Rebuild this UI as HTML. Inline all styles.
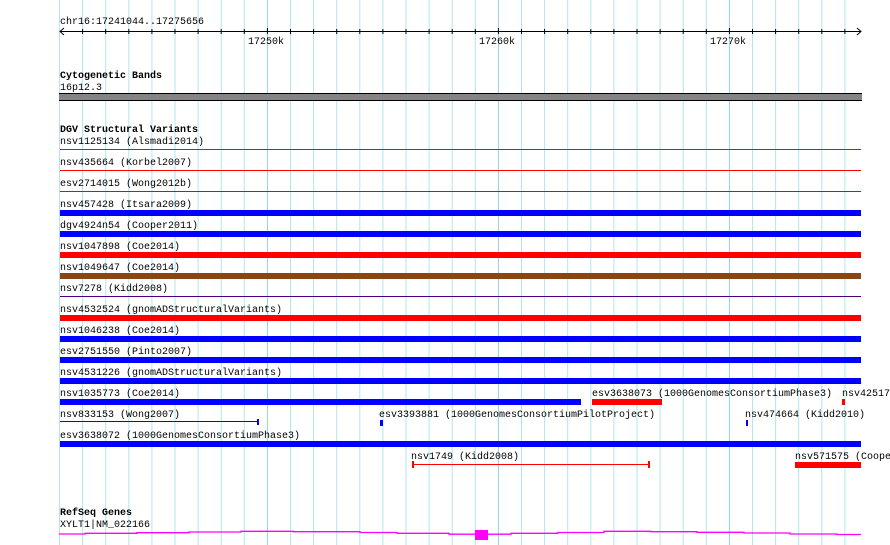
<!DOCTYPE html>
<html><head><meta charset="utf-8"><style>
html,body{margin:0;padding:0;background:#fff;width:890px;height:545px;overflow:hidden}
svg{display:block}
text{font-family:"Liberation Mono","DejaVu Sans Mono",monospace;font-size:10px;fill:#000}
.b{font-weight:bold}
</style></head><body>
<svg width="890" height="545" xmlns="http://www.w3.org/2000/svg">
<g id="grid" stroke-width="1">
<line x1="59.5" y1="0" x2="59.5" y2="545" stroke="#aee8ee"/>
<line x1="82.6" y1="0" x2="82.6" y2="545" stroke="#aee8ee"/>
<line x1="105.7" y1="0" x2="105.7" y2="545" stroke="#aee8ee"/>
<line x1="128.8" y1="0" x2="128.8" y2="545" stroke="#aee8ee"/>
<line x1="151.9" y1="0" x2="151.9" y2="545" stroke="#aee8ee"/>
<line x1="175" y1="0" x2="175" y2="545" stroke="#aee8ee"/>
<line x1="198.1" y1="0" x2="198.1" y2="545" stroke="#aee8ee"/>
<line x1="221.2" y1="0" x2="221.2" y2="545" stroke="#aee8ee"/>
<line x1="244.3" y1="0" x2="244.3" y2="545" stroke="#aee8ee"/>
<line x1="267.4" y1="0" x2="267.4" y2="545" stroke="#92cfe8"/>
<line x1="290.5" y1="0" x2="290.5" y2="545" stroke="#aee8ee"/>
<line x1="313.6" y1="0" x2="313.6" y2="545" stroke="#aee8ee"/>
<line x1="336.7" y1="0" x2="336.7" y2="545" stroke="#aee8ee"/>
<line x1="359.8" y1="0" x2="359.8" y2="545" stroke="#aee8ee"/>
<line x1="382.9" y1="0" x2="382.9" y2="545" stroke="#aee8ee"/>
<line x1="406" y1="0" x2="406" y2="545" stroke="#aee8ee"/>
<line x1="429.1" y1="0" x2="429.1" y2="545" stroke="#aee8ee"/>
<line x1="452.2" y1="0" x2="452.2" y2="545" stroke="#aee8ee"/>
<line x1="475.3" y1="0" x2="475.3" y2="545" stroke="#aee8ee"/>
<line x1="498.4" y1="0" x2="498.4" y2="545" stroke="#92cfe8"/>
<line x1="521.5" y1="0" x2="521.5" y2="545" stroke="#aee8ee"/>
<line x1="544.6" y1="0" x2="544.6" y2="545" stroke="#aee8ee"/>
<line x1="567.7" y1="0" x2="567.7" y2="545" stroke="#aee8ee"/>
<line x1="590.8" y1="0" x2="590.8" y2="545" stroke="#aee8ee"/>
<line x1="613.9" y1="0" x2="613.9" y2="545" stroke="#aee8ee"/>
<line x1="637" y1="0" x2="637" y2="545" stroke="#aee8ee"/>
<line x1="660.1" y1="0" x2="660.1" y2="545" stroke="#aee8ee"/>
<line x1="683.2" y1="0" x2="683.2" y2="545" stroke="#aee8ee"/>
<line x1="706.3" y1="0" x2="706.3" y2="545" stroke="#aee8ee"/>
<line x1="729.4" y1="0" x2="729.4" y2="545" stroke="#92cfe8"/>
<line x1="752.5" y1="0" x2="752.5" y2="545" stroke="#aee8ee"/>
<line x1="775.6" y1="0" x2="775.6" y2="545" stroke="#aee8ee"/>
<line x1="798.7" y1="0" x2="798.7" y2="545" stroke="#aee8ee"/>
<line x1="821.8" y1="0" x2="821.8" y2="545" stroke="#aee8ee"/>
<line x1="844.9" y1="0" x2="844.9" y2="545" stroke="#aee8ee"/>
</g>

<!-- ruler -->
<text x="60" y="24">chr16:17241044..17275656</text>
<line x1="60" y1="31.5" x2="861" y2="31.5" stroke="#000"/>
<path d="M64 28 L60 31.5 L64 35 M857 28 L861 31.5 L857 35" stroke="#000" fill="none"/>
<g stroke="#000">
<path d="M82.6 29v5M105.7 29v5M128.8 29v5M151.9 29v5M175 29v5M198.1 29v5M221.2 29v5M244.3 29v5M267.4 28v6M290.5 29v5M313.6 29v5M336.7 29v5M359.8 29v5M382.9 29v5M406 29v5M429.1 29v5M452.2 29v5M475.3 29v5M498.4 28v6M521.5 29v5M544.6 29v5M567.7 29v5M590.8 29v5M613.9 29v5M637 29v5M660.1 29v5M683.2 29v5M706.3 29v5M729.4 28v6M752.5 29v5M775.6 29v5M798.7 29v5M821.8 29v5M844.9 29v5"/>
</g>
<text x="248" y="44">17250k</text>
<text x="479" y="44">17260k</text>
<text x="710" y="44">17270k</text>

<!-- cytoband -->
<text x="60" y="78" class="b">Cytogenetic Bands</text>
<text x="60" y="90">16p12.3</text>
<rect x="59" y="93" width="803" height="8" fill="#858385"/>
<rect x="59" y="93" width="803" height="1" fill="#000"/>
<rect x="59" y="100" width="803" height="1" fill="#000"/>

<!-- DGV -->
<text x="60" y="132" class="b">DGV Structural Variants</text>
<text x="60" y="144">nsv1125134 (Alsmadi2014)</text>
<rect x="60" y="149" width="801" height="1" fill="#f00"/>
<text x="60" y="165">nsv435664 (Korbel2007)</text>
<rect x="60" y="170" width="801" height="1" fill="#f00"/>
<text x="60" y="186">esv2714015 (Wong2012b)</text>
<rect x="60" y="191" width="801" height="1" fill="#e00"/>
<text x="60" y="207">nsv457428 (Itsara2009)</text>
<rect x="60" y="210" width="801" height="6" fill="#00f"/>
<text x="60" y="228">dgv4924n54 (Cooper2011)</text>
<rect x="60" y="231" width="801" height="6" fill="#00f"/>
<text x="60" y="249">nsv1047898 (Coe2014)</text>
<rect x="60" y="252" width="801" height="6" fill="#f00"/>
<text x="60" y="270">nsv1049647 (Coe2014)</text>
<rect x="60" y="273" width="801" height="6" fill="#8b4513"/>
<text x="60" y="291">nsv7278 (Kidd2008)</text>
<rect x="60" y="296" width="801" height="1" fill="#4b0082"/>
<text x="60" y="312">nsv4532524 (gnomADStructuralVariants)</text>
<rect x="60" y="315" width="801" height="6" fill="#f00"/>
<text x="60" y="333">nsv1046238 (Coe2014)</text>
<rect x="60" y="336" width="801" height="6" fill="#00f"/>
<text x="60" y="354">esv2751550 (Pinto2007)</text>
<rect x="60" y="357" width="801" height="6" fill="#00f"/>
<text x="60" y="375">nsv4531226 (gnomADStructuralVariants)</text>
<rect x="60" y="378" width="801" height="6" fill="#00f"/>

<text x="60" y="396">nsv1035773 (Coe2014)</text>
<rect x="60" y="399" width="521" height="6" fill="#00f"/>
<text x="592" y="396">esv3638073 (1000GenomesConsortiumPhase3)</text>
<rect x="592" y="399" width="70" height="6" fill="#f00"/>
<text x="842" y="396">nsv42517</text>
<rect x="842" y="399" width="3" height="6" fill="#f00"/>

<text x="60" y="417">nsv833153 (Wong2007)</text>
<rect x="60" y="421" width="198" height="1" fill="#00f"/>
<rect x="257" y="419" width="2" height="6" fill="#00f"/>
<text x="379" y="417">esv3393881 (1000GenomesConsortiumPilotProject)</text>
<rect x="380" y="420" width="3" height="6" fill="#00f"/>
<text x="745" y="417">nsv474664 (Kidd2010)</text>
<rect x="746" y="420" width="2" height="6" fill="#00f"/>

<text x="60" y="438">esv3638072 (1000GenomesConsortiumPhase3)</text>
<rect x="60" y="441" width="801" height="6" fill="#00f"/>

<text x="411" y="459">nsv1749 (Kidd2008)</text>
<rect x="413" y="464" width="237" height="1" fill="#f00"/>
<rect x="412" y="461" width="2" height="7" fill="#f00"/>
<rect x="648" y="461" width="2" height="7" fill="#f00"/>
<text x="795" y="459">nsv571575 (Coope</text>
<rect x="795" y="462" width="66" height="6" fill="#f00"/>

<!-- RefSeq -->
<text x="60" y="515" class="b">RefSeq Genes</text>
<text x="60" y="527">XYLT1|NM_022166</text>
<polyline fill="none" stroke="#f0f" stroke-width="1.3" points="59,534 85,534 85,533.3 137,533.3 137,532.7 189,532.7 189,532 241,532 241,531.3 293,531.3 293,531.7 360,531.7 360,532.5 397,532.5 397,533.3 449,533.3 449,534.2 511,534.2 511,533.3 558,533.3 558,532.5 604,532.5 604,531.3 651,531.3 651,531.7 697,531.7 697,532.3 744,532.3 744,533 790,533 790,534 837,534 837,534.5 861,534.5"/>
<rect x="475" y="530" width="13" height="10" fill="#f0f"/>
</svg>
</body></html>
